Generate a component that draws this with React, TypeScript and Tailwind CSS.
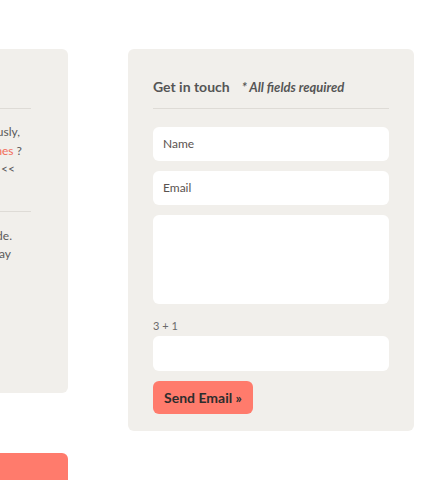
import React from "react";

const font = { fontFamily: "Lato, 'Open Sans', sans-serif" };

function Line({ children, pr }: { children: React.ReactNode; pr: string }) {
  return (
    <div className={`flex justify-end whitespace-nowrap ${pr}`}>
      <span>{children}</span>
    </div>
  );
}

export default function App() {
  return (
    <div
      className="w-[440px] h-[480px] overflow-hidden bg-white flex pt-[49px] text-[#5a5a5a]"
      style={font}
    >
      {/* left column, mostly off screen */}
      <div className="w-[68px] shrink-0 flex flex-col">
        <div className="h-[344px] shrink-0 bg-[#f1efeb] rounded-r-md overflow-hidden pt-[59px] text-[12px] leading-[18.5px]">
          <div className="w-[31px] border-t border-[#dedbd6]" />
          <div className="pt-[14px] pb-[32px]">
            <Line pr="pr-[48px]">We have worked together previously,</Line>
            <Line pr="pr-[46px]">
              looking for more <span className="text-[#f26c5a]">themes</span> ?
            </Line>
            <Line pr="pr-[53px]">&gt;&gt; Browse the portfolio &lt;&lt;</Line>
          </div>
          <div className="w-[31px] border-t border-[#dedbd6]" />
          <div className="pt-[15px]">
            <Line pr="pr-[56px]">Every project is hand made.</Line>
            <Line pr="pr-[57px]">Get in touch today</Line>
          </div>
        </div>
        <div className="mt-[60px] h-[40px] shrink-0 bg-[#ff7b6c] rounded-tr-md" />
      </div>

      {/* contact panel */}
      <div className="ml-[60px] w-[286px] h-[382px] bg-[#f1efeb] rounded-md px-[25px] pt-[27px]">
        <div className="flex items-baseline gap-[12px] pb-[10px] border-b border-[#dedbd6]">
          <h3 className="text-[14px] font-bold text-[#555]">Get in touch</h3>
          <span className="text-[13px] font-bold italic text-[#555]">* All fields required</span>
        </div>
        <form className="flex flex-col pt-[18px]">
          <input
            placeholder="Name"
            className="h-[34px] rounded-md bg-white px-[10px] text-[12px] text-[#555] placeholder:text-[#5a5350] outline-none"
          />
          <input
            placeholder="Email"
            className="mt-[10px] h-[34px] rounded-md bg-white px-[10px] text-[12px] text-[#555] placeholder:text-[#5a5350] outline-none"
          />
          <textarea className="mt-[10px] h-[89px] rounded-md bg-white px-[10px] resize-none outline-none" />
          <label className="mt-[15px] text-[11px] leading-[14px] text-[#6a6a6a]">3 + 1</label>
          <input className="mt-[3px] h-[35px] rounded-md bg-white px-[10px] outline-none" />
          <button
            type="button"
            className="mt-[10px] w-[100px] h-[33px] rounded-md bg-[#ff7b6c] text-[14px] font-bold text-[#2d2d2d]"
          >
            Send Email »
          </button>
        </form>
      </div>
    </div>
  );
}
